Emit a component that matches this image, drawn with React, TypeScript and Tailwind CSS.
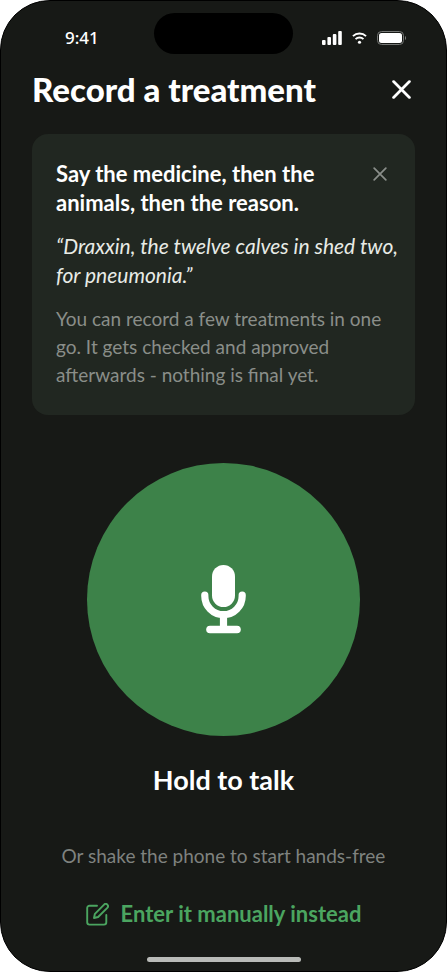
import React from "react";

function SignalIcon() {
  return (
    <svg width="20" height="14" viewBox="0 0 20 14" fill="currentColor" aria-hidden="true">
      <rect x="0" y="9" width="3.600" height="5" rx="1" />
      <rect x="5.400" y="6" width="3.600" height="8" rx="1" />
      <rect x="10.800" y="3" width="3.600" height="11" rx="1" />
      <rect x="16.200" y="0" width="3.600" height="14" rx="1" />
    </svg>
  );
}

function WifiIcon() {
  return (
    <svg width="15" height="14" viewBox="0 0 16 14" fill="none" stroke="currentColor" strokeWidth="2" aria-hidden="true">
      <path d="M1 5a10 10 0 0 1 14 0" />
      <path d="M3.800 8.200a6 6 0 0 1 8.400 0" />
      <circle cx="8" cy="11.500" r="1.700" fill="currentColor" stroke="none" />
    </svg>
  );
}

function BatteryIcon() {
  return (
    <svg width="29" height="14" viewBox="0 0 29 14" fill="none" aria-hidden="true">
      <rect x="0.500" y="0.500" width="26" height="13" rx="4" stroke="#747674" />
      <rect x="2" y="2" width="23" height="10" rx="2.500" fill="#fff" />
      <path d="M28 5v4c.8-.4 1.200-1.100 1.200-2S28.800 5.400 28 5z" fill="#747674" />
    </svg>
  );
}

function CrossIcon({ size, width }: { size: number; width: number }) {
  return (
    <svg width={size} height={size} viewBox="0 0 18 18" fill="none" stroke="currentColor" strokeWidth={width} strokeLinecap="round" aria-hidden="true">
      <path d="M1.500 1.500l15 15M16.500 1.500l-15 15" />
    </svg>
  );
}

function MicIcon() {
  return (
    <svg width="46" height="70" viewBox="0 0 46 70" fill="none" stroke="#fff" strokeLinecap="round" aria-hidden="true">
      <rect x="11" y="0" width="23" height="42" rx="11.500" fill="#fff" stroke="none" />
      <path d="M3.800 30v1a18.700 18.700 0 0 0 37.400 0v-1" strokeWidth="7.200" />
      <path d="M22.500 51v13" strokeWidth="7.200" />
      <path d="M9 64.500h27" strokeWidth="7.600" />
    </svg>
  );
}

function EditIcon() {
  return (
    <svg width="23" height="23" viewBox="0 0 23 23" fill="none" stroke="currentColor" strokeWidth="1.900" strokeLinecap="round" strokeLinejoin="round" aria-hidden="true">
      <path d="M11 2.700H3.500a2.300 2.300 0 0 0-2.300 2.300v14.300a2.300 2.300 0 0 0 2.300 2.300h14.500a2.300 2.300 0 0 0 2.300-2.300V12" />
      <path d="M8 15l.9-4.200 9.200-9.200a2.200 2.200 0 0 1 3.200 3.200l-9.200 9.200z" />
    </svg>
  );
}

export default function App() {
  return (
    <div className="min-h-screen bg-white font-[Lato,sans-serif]">
      <div className="flex min-h-screen flex-col rounded-[50px] border border-black bg-[#171916] text-white">
        <header className="grid grid-cols-[1fr_auto_1fr] items-center px-10 pt-3">
          <span className="pt-2 pl-6 font-['Noto_Sans',sans-serif] text-[17px] font-medium">9:41</span>
          <div className="h-[41px] w-[139px] rounded-full bg-black" />
          <div className="flex items-center justify-end pt-2">
            <SignalIcon />
            <div className="flex gap-2.5 pl-2.5">
              <WifiIcon />
              <BatteryIcon />
            </div>
          </div>
        </header>

        <main className="flex grow flex-col items-center px-[31px]">
          <div className="mt-[15px] flex w-full items-center justify-between">
            <h1 className="text-[33px] leading-[41px] font-black">Record a treatment</h1>
            <button type="button" aria-label="Close" className="p-1">
              <CrossIcon size={19} width={2.6} />
            </button>
          </div>

          <section className="mt-6 w-full rounded-2xl bg-[#212721] px-6 pt-[25px] pb-[26px]">
            <div className="flex items-start justify-between">
              <h2 className="text-[22px] leading-[29px] font-bold">
                Say the medicine, then the<br />animals, then the reason.
              </h2>
              <button type="button" aria-label="Dismiss tip" className="mt-2 mr-1 text-[#8a8e8a]">
                <CrossIcon size={14} width={2.2} />
              </button>
            </div>
            <p className="mt-3.5 text-[21px] leading-[29px] whitespace-nowrap text-[#e8ebe6] italic">
              “Draxxin, the twelve calves in shed two,<br />for pneumonia.”
            </p>
            <p className="mt-4 text-[19px] leading-7 text-[#8a8e89]">
              You can record a few treatments in one<br />go. It gets checked and approved<br />afterwards - nothing is final yet.
            </p>
          </section>

          <button type="button" aria-labelledby="talk-label" className="mt-12 flex size-[273px] items-center justify-center rounded-full bg-[#3d8249]">
            <MicIcon />
          </button>
          <p id="talk-label" className="mt-6.5 text-[27px] leading-9 font-bold">Hold to talk</p>
          <p className="mt-11 text-[19px] leading-7 text-[#7f827f]">Or shake the phone to start hands-free</p>
          <a href="#manual" className="mt-7.5 flex items-center gap-3 text-[22px] leading-7 font-bold text-[#4ba560]">
            <EditIcon />
            Enter it manually instead
          </a>
        </main>

        <footer className="flex justify-center pb-[9px]">
          <div className="h-[5px] w-[154px] rounded-full bg-[#b9bbb8]" />
        </footer>
      </div>
    </div>
  );
}
